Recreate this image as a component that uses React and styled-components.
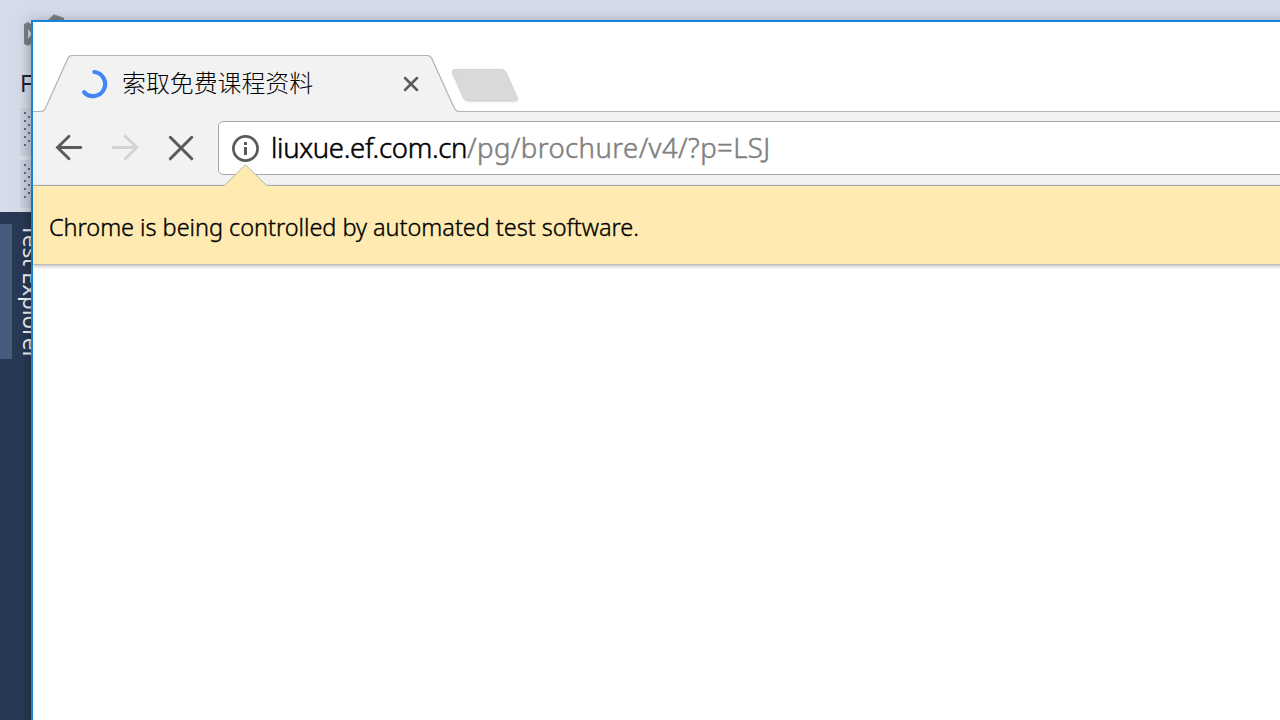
import React from "react";
import styled, { createGlobalStyle } from "styled-components";

const Global = createGlobalStyle`
  * { box-sizing: border-box; }
  body { margin: 0; overflow: hidden; font-family: "Noto Sans", "Noto Sans CJK SC", sans-serif; }
`;

const Desktop = styled.div`
  position: relative;
  width: 1280px;
  height: 720px;
  overflow: hidden;
  display: flex;
  flex-direction: column;
  background: #293955;
`;

const IdeHeader = styled.div`
  height: 212px;
  flex: none;
  background: #d6dbe9;
  padding-left: 18px;
`;

const IdeLogo = styled.svg`
  display: block;
  width: 60px;
  height: 70px;
`;

const IdeMenu = styled.div`
  height: 36px;
  padding-left: 2px;
  font-size: 23px;
  line-height: 27px;
  color: #1b2233;
`;

const Grips = styled.div`
  display: flex;
  flex-direction: column;
  gap: 4px;
  height: 104px;
  padding: 2px 0 2px 2px;
  background: #dadfeb;
  width: 80px;
`;

const Grip = styled.svg`
  flex: 1;
  width: 78px;
  min-height: 0;
  background: #cdd4e2;
`;

const IdeSide = styled.div`
  display: flex;
  padding-top: 12px;
`;

const SideMarker = styled.div`
  width: 12px;
  height: 135px;
  background: #465a7d;
`;

const SideLabel = styled.div`
  writing-mode: vertical-rl;
  font-size: 22.5px;
  line-height: 34px;
  letter-spacing: -0.1px;
  white-space: nowrap;
  color: #f3f5f9;
  margin-left: 2px;
`;

const Browser = styled.div`
  position: absolute;
  left: 31px;
  top: 20px;
  width: 1300px;
  height: 740px;
  border: 2px solid #1883d7;
  background: #fff;
  box-shadow: 0 3px 14px rgba(0, 0, 0, 0.36);
`;

const TabStrip = styled.div`
  position: relative;
  height: 90px;
  display: flex;
  padding-top: 33px;
`;

const TabShape = styled.svg`
  position: absolute;
  left: 0;
  top: 0;
  width: 1296px;
  height: 90px;
`;

const Tab = styled.div`
  position: relative;
  width: 418px;
  height: 57px;
  padding-left: 46px;
  display: flex;
  align-items: center;
`;

const Icon = styled.svg`
  width: ${(p) => p.$size}px;
  height: ${(p) => p.$size}px;
  flex: none;
  overflow: visible;
`;

const TabTitle = styled.div`
  font-family: "Noto Sans CJK SC", sans-serif;
  font-weight: 300;
  font-size: 23.9px;
  line-height: 30px;
  width: 280px;
  margin-left: 12px;
  padding-bottom: 4px;
  white-space: nowrap;
  color: #000;
`;

const NewTab = styled.svg`
  position: relative;
  width: 72px;
  height: 38px;
  margin-top: 12px;
`;

const Toolbar = styled.div`
  height: 74px;
  display: flex;
  align-items: flex-start;
  padding: 9px 0 0 20px;
  background: #f2f2f2;
  border-bottom: 1px solid #b5b5b5;
`;

const NavButton = styled.div`
  width: 32px;
  height: 54px;
  margin-right: 24px;
  display: flex;
  align-items: center;
  justify-content: center;
  color: ${(p) => (p.$disabled ? "#d3d3d3" : "#5a5a5a")};
`;

const Omnibox = styled.div`
  width: 1150px;
  height: 54px;
  margin-left: -3px;
  display: flex;
  align-items: center;
  padding-left: 10px;
  background: #fff;
  border: 1px solid #a9a9a9;
  border-radius: 5px;
`;

const Url = styled.div`
  display: flex;
  margin-left: 10px;
  font-size: 27.5px;
  font-weight: 300;
  -webkit-text-stroke: 0.5px currentColor;
  line-height: 52px;
  white-space: nowrap;
`;

const Host = styled.span`
  width: 196px;
  color: #000;
  letter-spacing: -0.32px;
`;

const Path = styled.span`
  color: #808080;
  letter-spacing: 0.44px;
`;

const InfoBar = styled.div`
  position: relative;
  height: 79px;
  padding: 4px 0 0 16px;
  display: flex;
  align-items: center;
  background: #ffebb2;
  border-bottom: 1px solid #bcbcbc;
  box-shadow: 0 1px 4px rgba(0, 0, 0, 0.3);
`;

const Pointer = styled.svg`
  position: absolute;
  left: 190px;
  top: -22px;
  width: 46px;
  height: 23px;
`;

const InfoText = styled.div`
  font-size: 23.5px;
  font-weight: 300;
  -webkit-text-stroke: 0.35px currentColor;
  line-height: 32px;
  letter-spacing: -0.04px;
  white-space: nowrap;
  color: #000;
`;

const dots = [];
for (let i = 0; i < 5; i++) {
  dots.push([4, 4 + i * 8]);
  if (i < 4) dots.push([8, 8 + i * 8]);
}

function GripDots() {
  return (
    <Grip viewBox="0 0 78 48">
      {dots.map(([x, y]) => (
        <rect key={`${x}-${y}`} x={x} y={y} width="2" height="2" fill="#5d6b86" />
      ))}
    </Grip>
  );
}

export default function App() {
  return (
    <Desktop>
      <Global />
      <IdeHeader>
        <IdeLogo viewBox="18 0 60 70">
          <path
            d="M24 24L27 22.5H29L34 27V41L29 45.5H27L24 44zM28 29V39L32 34z"
            fill="#7c8088"
            fillRule="evenodd"
          />
          <path d="M48 20L54 14.2L64 18V24H48z" fill="#7c8088" />
        </IdeLogo>
        <IdeMenu>File</IdeMenu>
        <Grips>
          <GripDots />
          <GripDots />
        </Grips>
      </IdeHeader>
      <IdeSide>
        <SideMarker />
        <SideLabel>Test Explorer</SideLabel>
      </IdeSide>

      <Browser>
        <TabStrip>
          <TabShape viewBox="33 22 1296 90">
            <path
              d="M32 112V111.5H41Q44 111.5 45.2 108.8L67.8 58.5Q69 55.5 72 55.5H427.5Q430.5 55.5 431.8 58.5L454.5 108.5Q456 111.5 459 111.5H1330V112z"
              fill="#f2f2f2"
            />
            <path
              d="M32 111.5H41Q44 111.5 45.2 108.8L67.8 58.5Q69 55.5 72 55.5H427.5Q430.5 55.5 431.8 58.5L454.5 108.5Q456 111.5 459 111.5H1330"
              fill="none"
              stroke="#b3b3b3"
              strokeWidth="1.2"
            />
          </TabShape>
          <Tab>
            <Icon $size={31} viewBox="79 68 31 31">
              <path
                d="M94.3 72A12.1 12.1 0 1 1 84.2 92.3"
                fill="none"
                stroke="#4285f4"
                strokeWidth="4.2"
                strokeLinecap="round"
              />
            </Icon>
            <TabTitle>索取免费课程资料</TabTitle>
            <Icon $size={18} viewBox="0 0 18 18">
              <path d="M3 3L15 15M15 3L3 15" stroke="#5a5a5a" strokeWidth="2.5" strokeLinecap="round" />
            </Icon>
          </Tab>
          <NewTab viewBox="451 67 72 38">
            <path
              d="M455.5 69.5H501Q504.5 69.5 506 72.5L517 97.5Q518.2 100.5 515 100.5H468.5Q465.5 100.5 464 97.8L452.8 73Q451.5 69.5 455.5 69.5z"
              fill="#d9d9d9"
              stroke="#d0d0d0"
              strokeWidth="1"
              style={{ filter: "drop-shadow(0 1px 1px rgba(0,0,0,.14))" }}
            />
          </NewTab>
        </TabStrip>

        <Toolbar>
          <NavButton>
            <Icon $size={32} viewBox="53 132 32 32">
              <path
                d="M80.8 147.5H57.5M69 136.3L57.5 147.5L69 158.7"
                fill="none"
                stroke="currentColor"
                strokeWidth="2.9"
                strokeLinecap="round"
              />
            </Icon>
          </NavButton>
          <NavButton $disabled>
            <Icon $size={32} viewBox="109 132 32 32">
              <path
                d="M113.3 147.5H136.7M125.3 136.3L136.7 147.5L125.3 158.7"
                fill="none"
                stroke="currentColor"
                strokeWidth="2.9"
                strokeLinecap="round"
              />
            </Icon>
          </NavButton>
          <NavButton>
            <Icon $size={32} viewBox="165 132 32 32">
              <path
                d="M170.3 137.3L191.8 158.8M191.8 137.3L170.3 158.8"
                stroke="currentColor"
                strokeWidth="3"
                strokeLinecap="round"
              />
            </Icon>
          </NavButton>
          <Omnibox>
            <Icon $size={32} viewBox="229 132 32 32">
              <circle cx="245.5" cy="148.5" r="12.1" fill="none" stroke="#5a5a5a" strokeWidth="2.7" />
              <rect x="244" y="142" width="3" height="3" fill="#5a5a5a" />
              <rect x="244" y="147" width="3" height="8" fill="#5a5a5a" />
            </Icon>
            <Url>
              <Host>liuxue.ef.com.cn</Host>
              <Path>/pg/brochure/v4/?p=LSJ</Path>
            </Url>
          </Omnibox>
        </Toolbar>

        <InfoBar>
          <Pointer viewBox="223 164 46 23">
            <path d="M224 187V186L245.5 164.8L267 186V187z" fill="#ffebb2" />
            <path d="M224.5 185.5L245.5 164.8L266.5 185.5" fill="none" stroke="#b5b5a8" strokeWidth="1" />
          </Pointer>
          <InfoText>Chrome is being controlled by automated test software.</InfoText>
        </InfoBar>
      </Browser>
    </Desktop>
  );
}
